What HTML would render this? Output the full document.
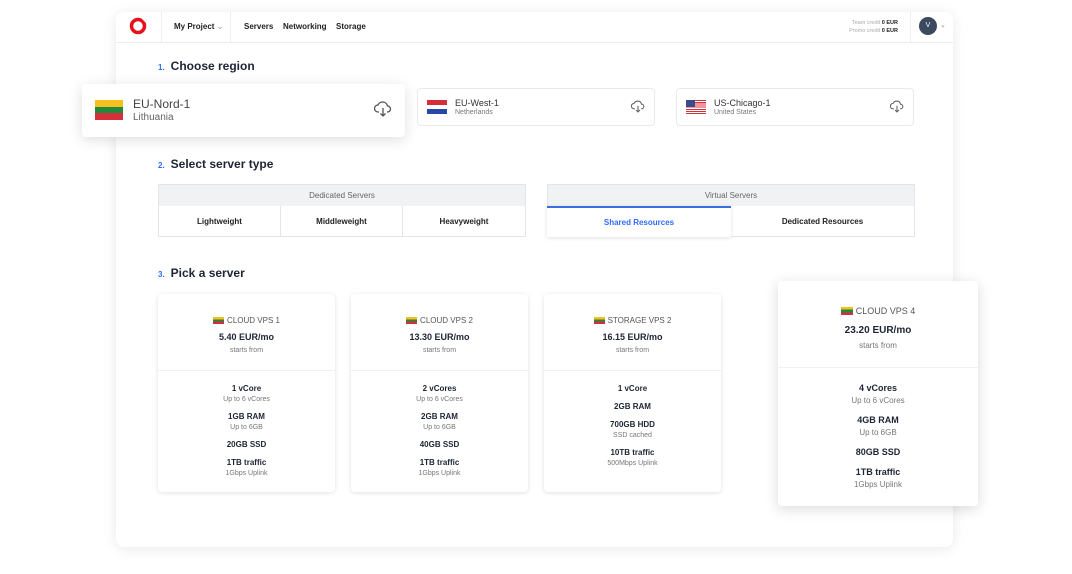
<!DOCTYPE html>
<html><head><meta charset="utf-8"><style>
*{box-sizing:border-box;margin:0;padding:0}
body{width:1072px;height:574px;background:#fff;font-family:"Liberation Sans",sans-serif;position:relative;overflow:hidden;color:#1d2433}
.a{position:absolute}
.panel{left:116px;top:12px;width:837px;height:535px;background:#fff;border-radius:8px;box-shadow:0 2px 14px rgba(0,0,0,.09)}
.hdr{left:116px;top:42px;width:837px;height:1px;background:#eceef1}
.nav{font-size:8px;font-weight:bold;color:#222}
.h2{font-size:12px;font-weight:bold;color:#1d2433}
.h2 b{color:#2f6bff;font-size:8px;margin-right:6px}
.reg{background:#fff;border:1px solid #e8eaee;border-radius:4px}
.flag{position:absolute;display:flex;flex-direction:column}
.flag i{flex:1;display:block}
.rn{font-size:9px;color:#333}
.rs{font-size:7px;color:#777}
.box{border:1px solid #e3e5e9;background:#fff}
.bh{background:#f1f2f4;font-size:8px;color:#666;text-align:center}
.tab{font-size:8px;font-weight:bold;text-align:center;color:#222}
.card{background:#fff;border-radius:4px;box-shadow:0 1px 5px rgba(0,0,0,.12)}
.c{position:absolute;left:0;right:0;text-align:center;line-height:1}
.t{font-size:8px;color:#555}
.p{font-size:9px;font-weight:bold;color:#1d2433}
.s{font-size:7px;color:#777}
.b{font-size:8px;font-weight:bold;color:#1d2433}
.lf{display:inline-block;width:11px;height:7px;vertical-align:-1px;margin-right:3px;background:linear-gradient(#f5c020 33%,#1f8a3b 33% 66%,#d62e3a 66%)}
.big .t{font-size:9px}.big .p{font-size:10px}.big .s{font-size:8px}.big .b{font-size:9px}
.big .lf{width:12px;height:8px}
</style></head><body>
<div class="a panel"></div>
<div class="a hdr"></div>
<svg class="a" style="left:129px;top:17px" width="18" height="18" viewBox="0 0 18 18"><circle cx="9" cy="9" r="6.5" fill="none" stroke="#e8101a" stroke-width="3.5"/><path d="M11 2 L17 1 L16 7 Z" fill="#e8101a"/><path d="M12 1 L17 1 L17 6" fill="#fff"/></svg>
<div class="a" style="left:161px;top:12px;width:1px;height:30px;background:#eceef1"></div>
<div class="a" style="left:230px;top:12px;width:1px;height:30px;background:#eceef1"></div>
<div class="a nav" style="left:174px;top:22px">My Project <span style="color:#999;font-weight:normal">⌄</span></div>
<div class="a nav" style="left:244px;top:22px">Servers</div>
<div class="a nav" style="left:283px;top:22px">Networking</div>
<div class="a nav" style="left:336px;top:22px">Storage</div>
<div class="a" style="left:820px;top:19px;width:78px;font-size:5.5px;color:#aaa;text-align:right;line-height:8px">Team credit <b style="color:#222">0 EUR</b><br>Promo credit <b style="color:#222">0 EUR</b></div>
<div class="a" style="left:910px;top:12px;width:1px;height:30px;background:#eceef1"></div>
<div class="a" style="left:919px;top:17px;width:18px;height:18px;border-radius:50%;background:#3c4a5f;color:#fff;font-size:7px;text-align:center;line-height:18px">V</div>
<div class="a" style="left:940px;top:21px;font-size:7px;color:#888">⌄</div>

<div class="a h2" style="left:158px;top:59px"><b>1.</b>Choose region</div>
<div class="a reg" style="left:82px;top:84px;width:323px;height:53px;box-shadow:0 3px 14px rgba(0,0,0,.13);border:none"></div>
<div class="flag" style="left:95px;top:100px;width:28px;height:20px"><i style="background:#f5c020"></i><i style="background:#1f8a3b"></i><i style="background:#d62e3a"></i></div>
<div class="a" style="left:133px;top:97px;font-size:12px;color:#444">EU-Nord-1</div>
<div class="a" style="left:133px;top:112px;font-size:10px;color:#666">Lithuania</div>
<svg class="a" style="left:374px;top:101px" width="18" height="16" viewBox="0 0 18 16" fill="none" stroke="#555" stroke-width="1.3"><path d="M5 11H4a3.5 3.5 0 0 1 0-7 5 5 0 0 1 9.5 1 3 3 0 0 1 0 6H13"/><path d="M9 7v8M6.5 12.5 9 15l2.5-2.5"/></svg>

<div class="a reg" style="left:417px;top:88px;width:238px;height:38px"></div>
<div class="flag" style="left:427px;top:100px;width:20px;height:14px"><i style="background:#d62e3a"></i><i style="background:#fff"></i><i style="background:#2748a8"></i></div>
<div class="a rn" style="left:455px;top:98px">EU-West-1</div>
<div class="a rs" style="left:455px;top:109px">Netherlands</div>
<svg class="a" style="left:631px;top:100px" width="14" height="13" viewBox="0 0 18 16" fill="none" stroke="#666" stroke-width="1.4"><path d="M5 11H4a3.5 3.5 0 0 1 0-7 5 5 0 0 1 9.5 1 3 3 0 0 1 0 6H13"/><path d="M9 7v8M6.5 12.5 9 15l2.5-2.5"/></svg>

<div class="a reg" style="left:676px;top:88px;width:238px;height:38px"></div>
<div class="a" style="left:686px;top:100px;width:20px;height:14px;background:repeating-linear-gradient(#d62e3a 0 1.1px,#fff 1.1px 2.2px)"></div>
<div class="a" style="left:686px;top:100px;width:9px;height:7px;background:#3a4a8a"></div>
<div class="a rn" style="left:714px;top:98px">US-Chicago-1</div>
<div class="a rs" style="left:714px;top:109px">United States</div>
<svg class="a" style="left:890px;top:100px" width="14" height="13" viewBox="0 0 18 16" fill="none" stroke="#666" stroke-width="1.4"><path d="M5 11H4a3.5 3.5 0 0 1 0-7 5 5 0 0 1 9.5 1 3 3 0 0 1 0 6H13"/><path d="M9 7v8M6.5 12.5 9 15l2.5-2.5"/></svg>

<div class="a h2" style="left:158px;top:157px"><b>2.</b>Select server type</div>
<div class="a box" style="left:158px;top:184px;width:368px;height:53px"></div>
<div class="a bh" style="left:159px;top:185px;width:366px;height:21px;line-height:21px">Dedicated Servers</div>
<div class="a tab" style="left:159px;top:206px;width:122px;height:30px;line-height:32px;border-right:1px solid #e3e5e9">Lightweight</div>
<div class="a tab" style="left:281px;top:206px;width:122px;height:30px;line-height:32px;border-right:1px solid #e3e5e9">Middleweight</div>
<div class="a tab" style="left:403px;top:206px;width:122px;height:30px;line-height:32px">Heavyweight</div>
<div class="a box" style="left:547px;top:184px;width:368px;height:53px"></div>
<div class="a bh" style="left:548px;top:185px;width:366px;height:21px;line-height:21px">Virtual Servers</div>
<div class="a tab" style="left:547px;top:206px;width:184px;height:31px;line-height:30px;color:#2f6bff;border-top:2px solid #3b6fe0;background:#fff;box-shadow:0 1px 4px rgba(0,0,0,.12)">Shared Resources</div>
<div class="a tab" style="left:731px;top:206px;width:183px;height:30px;line-height:32px">Dedicated Resources</div>

<div class="a h2" style="left:158px;top:266px"><b>3.</b>Pick a server</div>

<div class="a card" style="left:158px;top:294px;width:177px;height:198px">
<div class="c t" style="top:23px"><span class="lf"></span>CLOUD VPS 1</div>
<div class="c p" style="top:39px">5.40 EUR/mo</div>
<div class="c s" style="top:53px">starts from</div>
<div class="a" style="left:0;right:0;top:76px;height:1px;background:#eef0f2"></div>
<div class="c b" style="top:91px">1 vCore</div><div class="c s" style="top:102px">Up to 6 vCores</div>
<div class="c b" style="top:119px">1GB RAM</div><div class="c s" style="top:130px">Up to 6GB</div>
<div class="c b" style="top:147px">20GB SSD</div>
<div class="c b" style="top:165px">1TB traffic</div><div class="c s" style="top:176px">1Gbps Uplink</div>
</div>
<div class="a card" style="left:351px;top:294px;width:177px;height:198px">
<div class="c t" style="top:23px"><span class="lf"></span>CLOUD VPS 2</div>
<div class="c p" style="top:39px">13.30 EUR/mo</div>
<div class="c s" style="top:53px">starts from</div>
<div class="a" style="left:0;right:0;top:76px;height:1px;background:#eef0f2"></div>
<div class="c b" style="top:91px">2 vCores</div><div class="c s" style="top:102px">Up to 6 vCores</div>
<div class="c b" style="top:119px">2GB RAM</div><div class="c s" style="top:130px">Up to 6GB</div>
<div class="c b" style="top:147px">40GB SSD</div>
<div class="c b" style="top:165px">1TB traffic</div><div class="c s" style="top:176px">1Gbps Uplink</div>
</div>
<div class="a card" style="left:544px;top:294px;width:177px;height:198px">
<div class="c t" style="top:23px"><span class="lf"></span>STORAGE VPS 2</div>
<div class="c p" style="top:39px">16.15 EUR/mo</div>
<div class="c s" style="top:53px">starts from</div>
<div class="a" style="left:0;right:0;top:76px;height:1px;background:#eef0f2"></div>
<div class="c b" style="top:91px">1 vCore</div>
<div class="c b" style="top:109px">2GB RAM</div>
<div class="c b" style="top:127px">700GB HDD</div><div class="c s" style="top:138px">SSD cached</div>
<div class="c b" style="top:155px">10TB traffic</div><div class="c s" style="top:166px">500Mbps Uplink</div>
</div>
<div class="a card big" style="left:778px;top:281px;width:200px;height:225px;box-shadow:0 3px 14px rgba(0,0,0,.15)">
<div class="c t" style="top:26px"><span class="lf"></span>CLOUD VPS 4</div>
<div class="c p" style="top:45px">23.20 EUR/mo</div>
<div class="c s" style="top:61px">starts from</div>
<div class="a" style="left:0;right:0;top:86px;height:1px;background:#eef0f2"></div>
<div class="c b" style="top:103px">4 vCores</div><div class="c s" style="top:116px">Up to 6 vCores</div>
<div class="c b" style="top:135px">4GB RAM</div><div class="c s" style="top:148px">Up to 6GB</div>
<div class="c b" style="top:167px">80GB SSD</div>
<div class="c b" style="top:187px">1TB traffic</div><div class="c s" style="top:200px">1Gbps Uplink</div>
</div>
</body></html>
